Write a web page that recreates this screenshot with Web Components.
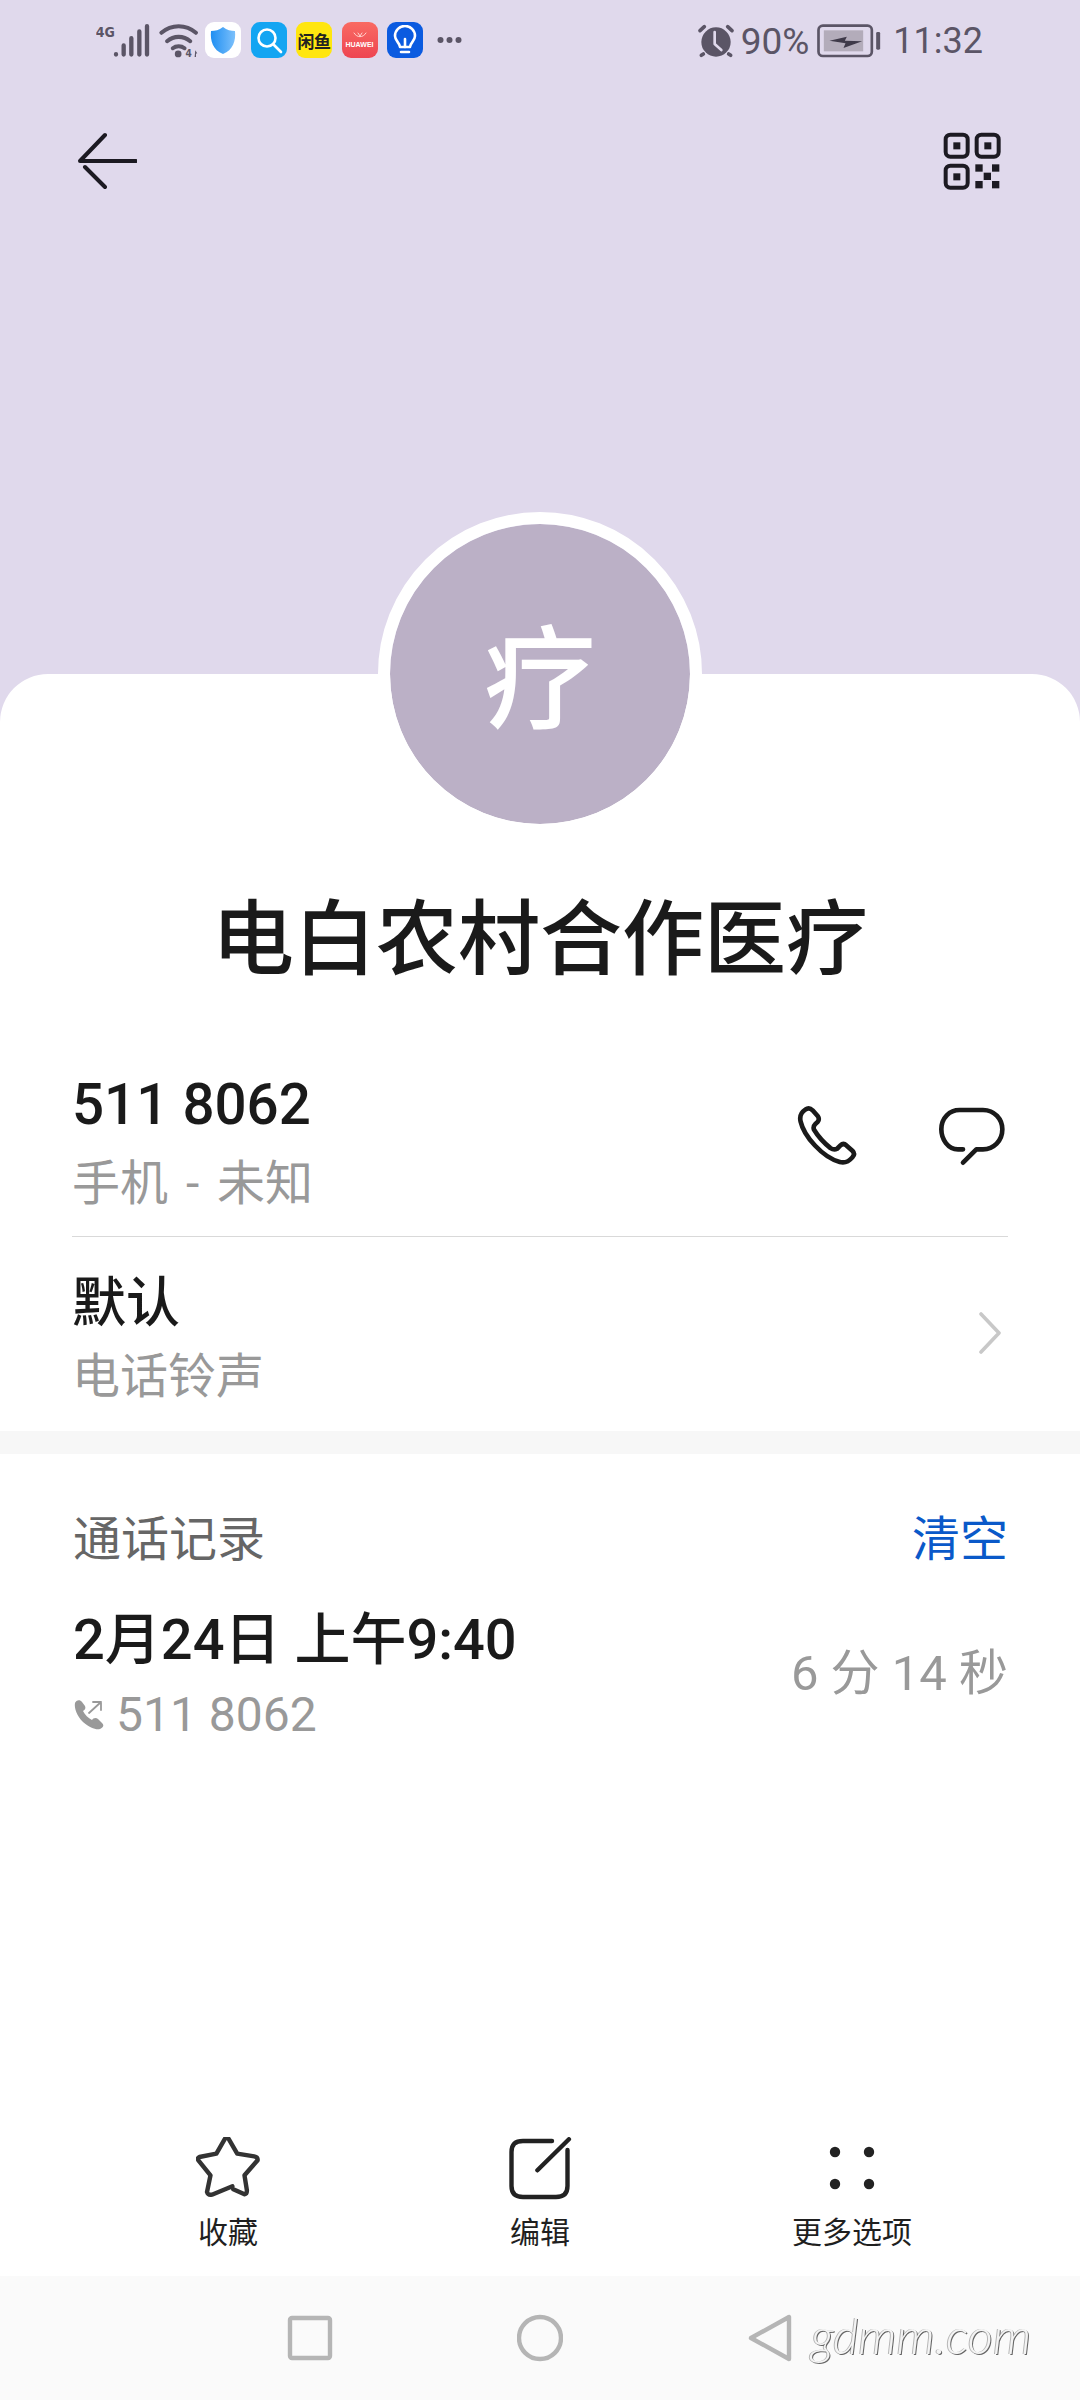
<!DOCTYPE html>
<html lang="zh">
<head>
<meta charset="utf-8">
<title>联系人详情</title>
<style>
  html, body { margin: 0; padding: 0; }
  body {
    width: 1080px;
    height: 2400px;
    overflow: hidden;
    background: #e0d9ec;
    color: #1a1a1a;
    font-family: Roboto, "Noto Sans CJK SC", sans-serif;
  }
  #app { display: flex; flex-direction: column; height: 2400px; }
  .pri { font-size: 56.5px; font-weight: 500; }
  .cjk { font-size: 54px; font-weight: 500; }
  .sec { font-size: 48px; color: #999; word-spacing: 6px; }
</style>
</head>
<body>
<div id="app">
  <status-bar></status-bar>
  <top-bar></top-bar>
  <contact-card name="电白农村合作医疗" initial="疗">
    <info-row divider style="--h:177px;--pt:10px;--gap:9px">
      <span slot="primary" class="pri">511 8062</span>
      <span slot="secondary" class="sec">手机 - 未知</span>
      <round-actions slot="trailing" style="margin-top:34px"></round-actions>
    </info-row>
    <info-row style="--h:194px;--pt:32px;--gap:3px">
      <span slot="primary" class="cjk">默认</span>
      <span slot="secondary" class="sec">电话铃声</span>
      <row-chevron slot="trailing" style="margin-top:43px"></row-chevron>
    </info-row>
    <band-gap></band-gap>
    <call-log date="2月24日 上午9:40" number="511 8062" duration="6 分 14 秒"></call-log>
    <action-bar></action-bar>
    <nav-bar></nav-bar>
  </contact-card>
</div>

<script>
const STROKE = 'fill="none" stroke-linecap="round" stroke-linejoin="round"';

// Small base class: every element just stamps its markup once into an open root.
class Stamp extends HTMLElement {
  constructor() {
    super();
    this.attachShadow({ mode: 'open' });
  }
  connectedCallback() {
    this.shadowRoot.innerHTML = this.markup();
  }
}

// --- <status-bar> -----------------------------------------------------------
class StatusBar extends Stamp {
  markup() {
    return `
      <style>
        :host {
          display: flex;
          align-items: center;
          height: 80px;
          padding: 0 97px 0 96px;
          color: #5b5566;
          font: 400 36px Roboto, sans-serif;
        }
        svg { display: block; flex: none; }
        .tile {
          flex: none;
          width: 36px;
          height: 36px;
          border-radius: 9px;
          margin-right: 9.5px;
          display: flex;
          align-items: center;
          justify-content: center;
          overflow: hidden;
        }
        .fish {
          background: #ffe60f;
          color: #222;
          font: 700 17px/1 "Noto Sans CJK SC", sans-serif;
          letter-spacing: -0.5px;
        }
        .hw {
          background: linear-gradient(#f96a62, #ee4552);
          color: #fff;
          font: 700 7px/1 "Liberation Sans", sans-serif;
          flex-direction: column;
          gap: 3px;
        }
        .spacer { flex: 1; }
        .txt { position: relative; top: 1px; }
      </style>
      <svg width="54" height="37" viewBox="108 60 162 110">
        <text x="107" y="105" font-family="'DejaVu Sans Condensed','DejaVu Sans',sans-serif" font-weight="700" font-size="42" fill="#5b5566">4G</text>
        <g stroke="#5b5566" stroke-width="13" stroke-linecap="round" fill="none">
          <path d="M168 156v1M191 130v27M214 108v49M238 88v69M261 72v85"/>
        </g>
      </svg>
      <svg style="margin-left:8px;margin-right:5px" width="42" height="37" viewBox="295 60 125 110">
        <g ${STROKE} stroke="#5b5566" stroke-width="12">
          <path d="M305 92C335 66 378 66 408 92"/>
          <path d="M322 117C342 100 371 100 391 117"/>
          <path d="M339 138C349 130 364 130 374 138"/>
        </g>
        <circle cx="355" cy="155" r="10" fill="#5b5566"/>
        <text x="377" y="165" font-family="'DejaVu Sans Condensed',sans-serif" font-weight="700" font-size="30" fill="#5b5566">4</text>
        <path d="M406 144l6 10h-4v10h-4z" fill="#5b5566"/>
      </svg>
      <div class="tile" style="background:#fff">
        <svg width="28" height="30" viewBox="0 0 28 30">
          <defs><linearGradient id="sh" x1="0" x2="1"><stop offset="0" stop-color="#1f8ff2"/><stop offset="1" stop-color="#7cc0fb"/></linearGradient></defs>
          <path d="M14 2C18 5 22 6 26 6C27 16 24 25 14 29C4 25 1 16 2 6C6 6 10 5 14 2Z" fill="url(#sh)"/>
        </svg>
      </div>
      <div class="tile" style="background:#13a5f2">
        <svg width="30" height="30" viewBox="0 0 30 30" ${STROKE} stroke="#fff" stroke-width="2.6">
          <circle cx="13" cy="13" r="8.5"/><path d="M19.5 19.5L27 27"/>
        </svg>
      </div>
      <div class="tile fish">闲鱼</div>
      <div class="tile hw">
        <svg width="14" height="6" viewBox="0 0 14 6" ${STROKE} stroke="#ffd5d0" stroke-width="1"><path d="M1 1C4 6 10 6 13 1M5 1L7 4L9 1"/></svg>
        <span>HUAWEI</span>
      </div>
      <div class="tile" style="background:#0b5be0">
        <svg width="26" height="30" viewBox="0 0 26 30" ${STROKE} stroke="#fff" stroke-width="2.6">
          <path d="M8 22C8 18 3 16 3 11A10 10 0 0 1 23 11C23 16 18 18 18 22Z"/>
          <path d="M9 27H17M13 22V14"/>
        </svg>
      </div>
      <svg style="margin-left:4px" width="25" height="8" viewBox="0 0 25 8" fill="#5b5566">
        <circle cx="3.5" cy="4" r="3"/><circle cx="12.5" cy="4" r="3"/><circle cx="21.5" cy="4" r="3"/>
      </svg>
      <div class="spacer"></div>
      <svg width="40" height="35" viewBox="110 65 120 105">
        <circle cx="170" cy="122" r="44" fill="#5b5566"/>
        <g ${STROKE} stroke="#5b5566" stroke-width="11">
          <path d="M122 88L135 76M218 88L205 76M132 158L126 162M208 158L214 162"/>
        </g>
        <path d="M166 92V128L186 146" ${STROKE} stroke="#e0d9ec" stroke-width="8"/>
      </svg>
      <span class="txt" style="margin:0 7px 0 5px;font-size:37px">90%</span>
      <svg width="67" height="35" viewBox="470 65 200 105">
        <rect x="477" y="73" width="160" height="91" rx="13" fill="none" stroke="#5b5566" stroke-width="8"/>
        <rect x="493" y="87" width="118" height="63" fill="#b3acba"/>
        <rect x="650" y="92" width="12" height="53" rx="4" fill="#5b5566"/>
        <path d="M510 118L562 106L556 118L608 120L552 140L558 126Z" fill="#3f3a49"/>
      </svg>
      <span class="txt" style="margin-left:10px">11:32</span>`;
  }
}

// --- <top-bar> — back arrow and QR ------------------------------------------
class TopBar extends Stamp {
  markup() {
    return `
      <style>
        :host {
          display: flex;
          align-items: center;
          justify-content: space-between;
          height: 162px;
          padding: 0 78px 0 77px;
        }
        svg { display: block; }
      </style>
      <svg width="60" height="60" viewBox="0 0 60 60" ${STROKE} stroke="#1c1a22" stroke-width="4">
        <path d="M59 30H3L28 4M8 36L28 56"/>
      </svg>
      <svg width="60" height="60" viewBox="65 65 180 180" fill="#1c1a22">
        <g fill="none" stroke="#1c1a22" stroke-width="12">
          <rect x="76" y="76" width="66" height="66" rx="14"/>
          <rect x="169" y="76" width="66" height="66" rx="14"/>
          <rect x="76" y="169" width="66" height="66" rx="14"/>
        </g>
        <rect x="99" y="99" width="21" height="21"/>
        <rect x="192" y="99" width="21" height="21"/>
        <rect x="99" y="192" width="21" height="21"/>
        <rect x="165" y="165" width="22" height="22"/>
        <rect x="215" y="165" width="22" height="22"/>
        <rect x="190" y="190" width="22" height="22"/>
        <rect x="165" y="215" width="22" height="22"/>
        <rect x="215" y="215" width="22" height="22"/>
      </svg>`;
  }
}

// --- <contact-card> — white sheet with the avatar sitting on its top edge -----
class ContactCard extends Stamp {
  markup() {
    return `
      <style>
        :host {
          flex: 1;
          display: flex;
          flex-direction: column;
          margin-top: 432px;
          background: #fff;
          border-radius: 48px 48px 0 0;
          min-height: 0;
        }
        .avatar {
          box-sizing: border-box;
          flex: none;
          align-self: center;
          width: 324px;
          height: 324px;
          margin-top: -162px;
          padding-bottom: 6px;
          border: 12px solid #fff;
          border-radius: 50%;
          background: #bbb0c6;
          background-clip: padding-box;
          color: #fff;
          font: 500 112px/1 "Noto Sans CJK SC", sans-serif;
          display: flex;
          align-items: center;
          justify-content: center;
        }
        h1 {
          margin: 47px 0 0;
          text-align: center;
          font: 500 82px/100px "Noto Sans CJK SC", sans-serif;
          color: #1a1a1a;
        }
        .rest { flex: 1; display: flex; flex-direction: column; margin-top: 77px; min-height: 0; }
      </style>
      <div class="avatar">${this.getAttribute('initial')}</div>
      <h1>${this.getAttribute('name')}</h1>
      <div class="rest"><slot></slot></div>`;
  }
}

// --- <info-row> — two lines of text and something on the right --------------
class InfoRow extends Stamp {
  markup() {
    return `
      <style>
        :host {
          display: block;
          padding: 0 72px;
          font-family: Roboto, "Noto Sans CJK SC", sans-serif;
        }
        .row {
          display: flex;
          align-items: flex-start;
          justify-content: space-between;
          height: var(--h);
          box-sizing: border-box;
          padding-top: var(--pt);
        }
        :host([divider]) .row { border-bottom: 1px solid #d9d9d9; }
        .text { display: flex; flex-direction: column; gap: var(--gap); }
        .line { display: block; height: 70px; line-height: 70px; white-space: nowrap; }
      </style>
      <div class="row">
        <div class="text">
          <div class="line"><slot name="primary"></slot></div>
          <div class="line"><slot name="secondary"></slot></div>
        </div>
        <slot name="trailing"></slot>
      </div>`;
  }
}

// --- <round-actions> — call and message icons ------------------------------
class RoundActions extends Stamp {
  markup() {
    return `
      <style>
        :host { display: flex; align-items: center; gap: 79px; margin-right: 2px; }
        svg { display: block; }
      </style>
      <svg width="63" height="63" viewBox="80 75 190 190" ${STROKE} stroke="#1a1a1a" stroke-width="14">
        <path d="M108 92C96 100 90 112 94 128C104 172 160 236 212 250C228 254 240 248 250 236C258 228 256 222 250 216L232 200C226 194 220 194 214 200L204 210C196 214 190 212 184 208C164 192 146 172 134 152C132 146 134 140 138 136L146 128C150 122 150 118 146 112L130 94C122 86 116 86 108 92Z"/>
      </svg>
      <svg width="68" height="60" viewBox="505 85 204 180" ${STROKE} stroke="#1a1a1a" stroke-width="14">
        <path d="M580 215H565C535 215 515 185 515 155C515 120 540 97 570 97H640C675 97 698 125 698 155C698 190 672 215 640 215H620L580 255"/>
      </svg>`;
  }
}

class RowChevron extends Stamp {
  markup() {
    return `
      <style>:host { display: block; margin-right: 6px; } svg { display: block; }</style>
      <svg width="24" height="42" viewBox="0 0 24 42" ${STROKE} stroke="#c8c8c8" stroke-width="3.6">
        <path d="M3 2L21 21L3 40"/>
      </svg>`;
  }
}

class BandGap extends Stamp {
  markup() {
    return `<style>:host { display: block; height: 23px; background: #f7f7f7; }</style>`;
  }
}

// --- <call-log> — heading plus one entry ------------------------------------
class CallLog extends Stamp {
  markup() {
    return `
      <style>
        :host {
          display: block;
          padding: 44px 72px 0 73px;
          font-family: Roboto, "Noto Sans CJK SC", sans-serif;
        }
        .head, .entry { display: flex; justify-content: space-between; align-items: center; }
        .head { height: 74px; }
        .title { font-size: 48px; color: #666; }
        .clear { font-size: 48px; color: #0a59c9; }
        .entry { margin-top: 32px; }
        .date { font-size: 56px; font-weight: 500; line-height: 72px; color: #1a1a1a; white-space: nowrap; }
        .num {
          display: flex;
          align-items: center;
          gap: 11px;
          height: 72px;
          margin-top: 2px;
          font-size: 48px;
          color: #999;
        }
        .dur { font-size: 49px; color: #999; margin-bottom: 18px; }
        svg { display: block; }
      </style>
      <div class="head"><span class="title">通话记录</span><span class="clear">清空</span></div>
      <div class="entry">
        <div>
          <div class="date">${this.getAttribute('date')}</div>
          <div class="num">
            <svg width="32" height="32" viewBox="0 0 32 32">
              <path d="M2 5C3 2 7 1 9 4L12 8C13 10 12 12 10 13C12 17 15 20 19 22C20 20 23 19 25 21L29 25C31 27 31 29 27 31C23 32 17 30 10 24C4 18 1 10 2 5Z" fill="#999"/>
              <path d="M16 15L28 4M20 4H28V12" ${STROKE} stroke="#999" stroke-width="1.8"/>
            </svg>
            <span>${this.getAttribute('number')}</span>
          </div>
        </div>
        <span class="dur">${this.getAttribute('duration')}</span>
      </div>`;
  }
}

// --- <action-bar> — favourite, edit, more -----------------------------------
class ActionBar extends Stamp {
  markup() {
    return `
      <style>
        :host {
          display: grid;
          grid-template-columns: repeat(3, 312px);
          justify-content: center;
          margin-top: auto;
          padding-bottom: 26px;
          font: 400 30px/40px "Noto Sans CJK SC", sans-serif;
          color: #1f1f1f;
        }
        .item { display: flex; flex-direction: column; align-items: center; gap: 9px; }
        svg { display: block; }
      </style>
      <div class="item">
        <svg width="64" height="64" viewBox="0 0 64 64" ${STROKE} stroke="#333" stroke-width="4.4">
          <path d="M37.3 52.3L48.5 57.3Q51 57 50.9 53.3L48.5 38.3L61.6 23.3Q62 20 58.2 19.3L41.2 16.7L32.5 1.7Q30.7 0.5 29 1.7L20.4 16.7L3.4 20Q1 21 2.4 23.3L14.5 38.3L11 55Q12 58.5 15.9 57.7L36.4 49.3"/>
        </svg>
        <span>收藏</span>
      </div>
      <div class="item">
        <svg width="64" height="64" viewBox="0 0 64 64" ${STROKE} stroke="#222" stroke-width="4.4">
          <path d="M44 4H15Q3.5 4 3.5 15V49Q3.5 60 15 60H48Q59.5 60 59.5 49V13"/>
          <path d="M29.4 33.3L60.9 2.3"/>
        </svg>
        <span>编辑</span>
      </div>
      <div class="item">
        <svg width="64" height="64" viewBox="0 0 64 64" fill="#222">
          <circle cx="15" cy="15" r="5.2"/><circle cx="49" cy="15" r="5.2"/>
          <circle cx="15" cy="47" r="5.2"/><circle cx="49" cy="47" r="5.2"/>
        </svg>
        <span>更多选项</span>
      </div>`;
  }
}

// --- <nav-bar> — system buttons, the site watermark lies over it ------------
class NavBar extends Stamp {
  markup() {
    return `
      <style>
        :host {
          position: relative;
          display: flex;
          align-items: center;
          justify-content: center;
          gap: 184px;
          flex: none;
          height: 124px;
          background: #fafafa;
        }
        svg { display: block; }
        .mark {
          position: absolute;
          left: 811px;
          top: 29px;
          font: italic 300 49px/60px Lato, "Open Sans", sans-serif;
          color: #f4f4f4;
          text-shadow: 1px 1px 0 #666, -1px 0 0 #b5b5b5;
          white-space: nowrap;
        }
      </style>
      <svg width="46" height="48" viewBox="0 0 46 48" ${STROKE} stroke="#b5b5b5" stroke-width="4.4"><rect x="3" y="4" width="40" height="40" rx="2"/></svg>
      <svg width="46" height="48" viewBox="0 0 46 48" ${STROKE} stroke="#b5b5b5" stroke-width="4.4"><circle cx="23" cy="24" r="21"/></svg>
      <svg width="46" height="48" viewBox="0 0 46 48" ${STROKE} stroke="#b5b5b5" stroke-width="4.4"><path d="M42 3V45L4 24Z"/></svg>
      <span class="mark">gdmm.com</span>`;
  }
}

customElements.define('status-bar', StatusBar);
customElements.define('top-bar', TopBar);
customElements.define('contact-card', ContactCard);
customElements.define('info-row', InfoRow);
customElements.define('round-actions', RoundActions);
customElements.define('row-chevron', RowChevron);
customElements.define('band-gap', BandGap);
customElements.define('call-log', CallLog);
customElements.define('action-bar', ActionBar);
customElements.define('nav-bar', NavBar);
</script>
</body>
</html>
